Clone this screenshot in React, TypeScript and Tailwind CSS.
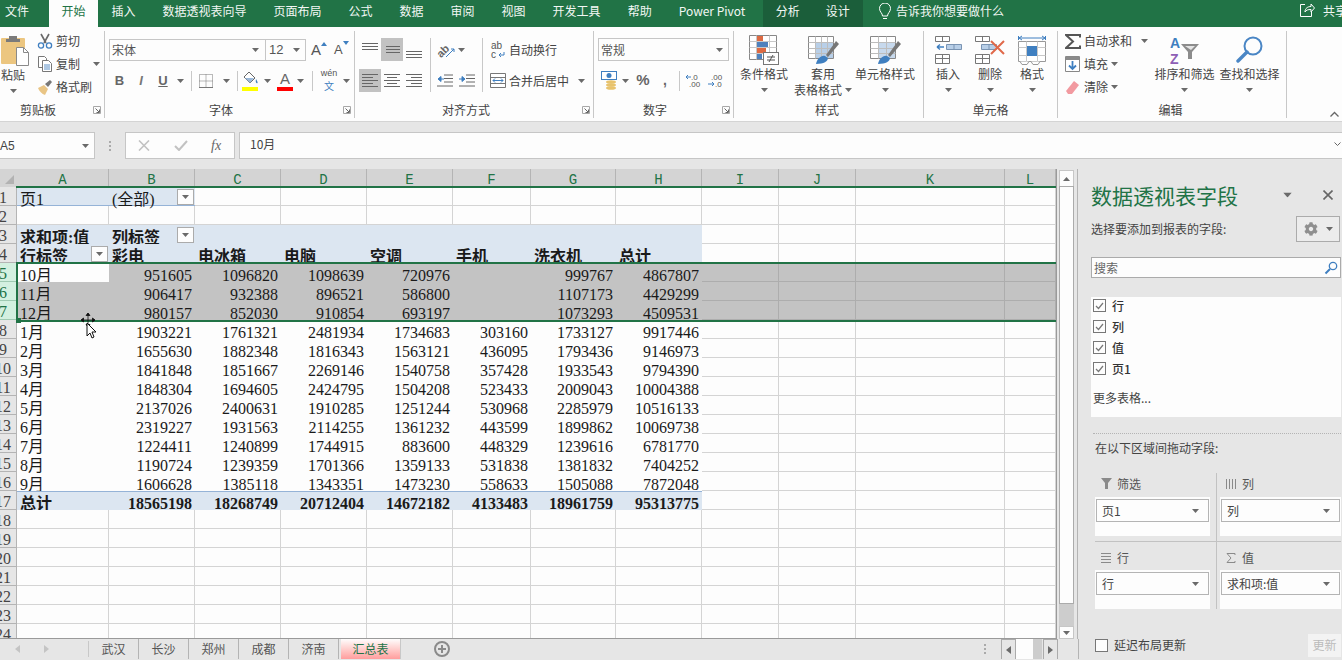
import React from "react";
import { FaCog } from "react-icons/fa";

const colLetters = ["A", "B", "C", "D", "E", "F", "G", "H", "I", "J", "K", "L"];
const rowGrid = "grid h-[19px] grid-rows-[19px] grid-cols-[17px_92px_86px_86px_86px_86px_78px_85px_86px_77px_77px_149px_51px]";

const selectedRows = [
  ["10月", "951605", "1096820", "1098639", "720976", "", "999767", "4867807"],
  ["11月", "906417", "932388", "896521", "586800", "", "1107173", "4429299"],
  ["12月", "980157", "852030", "910854", "693197", "", "1073293", "4509531"],
];

const dataRows = [
  ["1月", "1903221", "1761321", "2481934", "1734683", "303160", "1733127", "9917446"],
  ["2月", "1655630", "1882348", "1816343", "1563121", "436095", "1793436", "9146973"],
  ["3月", "1841848", "1851667", "2269146", "1540758", "357428", "1933543", "9794390"],
  ["4月", "1848304", "1694605", "2424795", "1504208", "523433", "2009043", "10004388"],
  ["5月", "2137026", "2400631", "1910285", "1251244", "530968", "2285979", "10516133"],
  ["6月", "2319227", "1931563", "2114255", "1361232", "443599", "1899862", "10069738"],
  ["7月", "1224411", "1240899", "1744915", "883600", "448329", "1239616", "6781770"],
  ["8月", "1190724", "1239359", "1701366", "1359133", "531838", "1381832", "7404252"],
  ["9月", "1606628", "1385118", "1343351", "1473230", "558633", "1505088", "7872048"],
];

const totalRow = ["总计", "18565198", "18268749", "20712404", "14672182", "4133483", "18961759", "95313775"];

const ribbonTabs = ["插入", "数据透视表向导", "页面布局", "公式", "数据", "审阅", "视图", "开发工具", "帮助", "Power Pivot"];

function Caret({ className = "" }: { className?: string }) {
  return (
    <svg width="7" height="4" viewBox="0 0 7 4" className={"shrink-0 " + className}>
      <path d="M0 0h7L3.5 4z" fill="#6a6a6a" />
    </svg>
  );
}

function Launcher() {
  return (
    <svg width="8" height="8" viewBox="0 0 8 8" className="shrink-0">
      <path d="M.5.5h7v7h-7z" fill="none" stroke="#a8a8a8" />
      <path d="M2.5 2.5l3.5 3.5M6.5 3.5v3h-3" fill="none" stroke="#666" />
    </svg>
  );
}

function Group({ label, launcher, labelPad = "", className, children }: { label: string; launcher?: boolean; labelPad?: string; className: string; children: React.ReactNode }) {
  return (
    <div className={"mt-[4px] flex h-[87px] shrink-0 flex-col border-r border-[#c8c8c8] " + className}>
      <div className="h-[71px]">{children}</div>
      <div className="flex h-[16px] items-center pr-[3px]">
        <span className={"flex-1 text-center leading-[16px] text-[#444] " + labelPad}>{label}</span>
        {launcher ? <Launcher /> : null}
      </div>
    </div>
  );
}

function Sep({ className = "" }: { className?: string }) {
  return <div className={"w-px shrink-0 bg-[#c8c8c8] " + className} />;
}

function Lines({ rows, active }: { rows: number[][]; active?: boolean }) {
  return (
    <div className={"flex h-[23px] w-[22px] items-center justify-center " + (active ? "bg-[#c2c2c2]" : "")}>
      <svg width="16" height="19" viewBox="0 0 16 19">
        {rows.map((r, i) => (
          <rect key={i} x={r[0]} y={r[1]} width={r[2]} height="1" fill="#666" />
        ))}
      </svg>
    </div>
  );
}

function BigButton({ icon, lines, width }: { icon: React.ReactNode; lines: string[]; width: string }) {
  return (
    <div className={"flex shrink-0 flex-col items-center " + width}>
      <div className="mt-[3px] flex h-[32px] items-center justify-center">{icon}</div>
      <span className="leading-[16px] text-[#444]">{lines[0]}</span>
      {lines[1] ? (
        <span className="flex items-center gap-[3px] leading-[15px] text-[#444]">
          {lines[1]}
          <Caret />
        </span>
      ) : (
        <Caret className="mt-[6px]" />
      )}
    </div>
  );
}

function SmallRow({ icon, text, caret }: { icon: React.ReactNode; text: string; caret?: string }) {
  return (
    <div className="flex h-[20px] items-center">
      <div className="flex w-[19px] shrink-0 items-center">{icon}</div>
      <span className="text-[#444]">{text}</span>
      {caret ? <Caret className={caret} /> : null}
    </div>
  );
}

const ClipboardIcon = (
  <svg width="30" height="31" viewBox="0 0 30 31">
    <rect x="1" y="3" width="24" height="26" rx="1" fill="#ecc680" />
    <path d="M9 1h8v3h3v3H6V4h3z" fill="#7b7b7b" />
    <path d="M16.5 12.5h7l5 5v13h-12z" fill="#fff" stroke="#8a8a8a" />
    <path d="M23.5 12.5v5h5" fill="none" stroke="#8a8a8a" />
  </svg>
);

const ScissorsIcon = (
  <svg width="16" height="16" viewBox="0 0 16 16">
    <path d="M4 1l5 9M12 1l-5 9" stroke="#6a6a6a" strokeWidth="1.6" />
    <circle cx="4" cy="12.5" r="2.6" fill="none" stroke="#3f7fc0" strokeWidth="1.3" />
    <circle cx="12" cy="12.5" r="2.6" fill="none" stroke="#3f7fc0" strokeWidth="1.3" />
  </svg>
);

const CopyIcon = (
  <svg width="16" height="16" viewBox="0 0 16 16">
    <path d="M1.5.5h6l2 2v9h-8z" fill="#fff" stroke="#777" />
    <path d="M5.5 4.5h6l3 3v8h-9z" fill="#fff" stroke="#777" />
    <path d="M7 9h6M7 11h6M7 13h6" stroke="#5b8fc7" />
  </svg>
);

const BrushIcon = (
  <svg width="16" height="16" viewBox="0 0 16 16">
    <path d="M1 9l6-3 4 4-3 6c-3-1-6-4-7-7z" fill="#e9c585" />
    <path d="M8 5l5-4 2 2-4 5z" fill="#777" />
  </svg>
);

const FillIcon = (
  <svg width="17" height="20" viewBox="0 0 17 20">
    <path d="M7 1l6 6-5 5-6-6z" fill="#fff" stroke="#666" />
    <path d="M3 7h9l-4 5z" fill="#9ab8da" />
    <path d="M14 8c1 2 2 3 1.500 4s-2.500 0-1.500-4z" fill="#3f7fc0" />
    <rect x="0" y="16" width="16" height="4" fill="#ffff00" />
  </svg>
);

const BordersIcon = (
  <svg width="14" height="14" viewBox="0 0 14 14">
    <path d="M.5.5h13v13H.5zM7 .5v13M.5 7h13" fill="none" stroke="#777" strokeDasharray="1 1" />
    <path d="M0 13.500h14" stroke="#777" />
  </svg>
);

const OrientIcon = (
  <svg width="20" height="20" viewBox="0 0 20 20">
    <text x="1" y="15" fontSize="11" fontFamily="Liberation Sans" fontWeight="700" fill="#666" transform="rotate(-45 7 12)">ab</text>
    <path d="M10 17l8-8M18 9h-3M18 9v3" stroke="#3f7fc0" fill="none" />
  </svg>
);

const WrapIcon = (
  <svg width="16" height="20" viewBox="0 0 16 20">
    <text x="1" y="9" fontSize="10" fontFamily="Liberation Sans" fill="#555">ab</text>
    <text x="1" y="18" fontSize="10" fontFamily="Liberation Sans" fill="#555">c</text>
    <path d="M14 12v3h-5M9 15l2-2M9 15l2 2" stroke="#3f7fc0" fill="none" />
  </svg>
);

const MergeIcon = (
  <svg width="16" height="15" viewBox="0 0 16 15">
    <path d="M.5.5h15v14H.5zM.5 4.500h15M.5 10.500h15" fill="#fff" stroke="#777" />
    <path d="M3 7.500h10M3 7.500l2-2M3 7.500l2 2M13 7.500l-2-2M13 7.500l-2 2" stroke="#3f7fc0" fill="none" />
  </svg>
);

function IndentIcon({ flip }: { flip?: boolean }) {
  return (
    <svg width="16" height="13" viewBox="0 0 16 13">
      <path d="M7 1h9M7 4.500h9M7 8h9M0 12h16" stroke="#666" />
      <path d={flip ? "M0 5h5M3 2.500L6 5 3 7.500z" : "M7 5H2M4 2.500L1 5l3 2.500z"} stroke="#3f7fc0" fill="#3f7fc0" />
    </svg>
  );
}

const AccountingIcon = (
  <svg width="18" height="19" viewBox="0 0 18 19">
    <rect x="0.500" y="0.500" width="15" height="8" fill="#fff" stroke="#3f7fc0" />
    <circle cx="8" cy="4.500" r="2.500" fill="#3f7fc0" />
    <ellipse cx="10" cy="11" rx="5" ry="1.800" fill="#e8c36e" />
    <ellipse cx="10" cy="14" rx="5" ry="1.800" fill="#e8c36e" />
    <ellipse cx="10" cy="17" rx="5" ry="1.800" fill="#e8c36e" />
  </svg>
);

function DecimalIcon({ more }: { more?: boolean }) {
  return (
    <svg width="18" height="15" viewBox="0 0 18 15">
      <text x={more ? 3 : 5} y="6.500" fontSize="8" fontFamily="Liberation Sans" fill="#555">{more ? ".00" : ".0"}</text>
      <text x={more ? 7 : 3} y="14" fontSize="8" fontFamily="Liberation Sans" fill="#555">{more ? ".0" : ".00"}</text>
      {more ? (
        <path d="M0 11h6M4 9l2 2-2 2" stroke="#3f7fc0" fill="none" />
      ) : (
        <path d="M0 4h5M2 2L0 4l2 2" stroke="#3f7fc0" fill="none" />
      )}
    </svg>
  );
}

const CondFormatIcon = (
  <svg width="30" height="30" viewBox="0 0 30 30">
    <path d="M.5.500h27v24H.5z" fill="#fff" stroke="#888" />
    <path d="M.5 6.500h27M.5 12.500h27M.5 18.500h27M7.500.500v24M20.500.500v24" stroke="#c8c8c8" />
    <rect x="8" y="1" width="6" height="5" fill="#dd6a43" />
    <rect x="8" y="7" width="11" height="5" fill="#4f81bd" />
    <rect x="8" y="13" width="9" height="5" fill="#dd6a43" />
    <rect x="8" y="19" width="5" height="5" fill="#4f81bd" />
    <rect x="14.500" y="17.500" width="15" height="12" fill="#fff" stroke="#777" />
    <path d="M18 22h8M18 25h8M24 20l-4 7" stroke="#555" fill="none" />
  </svg>
);

const TableStyleIcon = (
  <svg width="31" height="30" viewBox="0 0 31 30">
    <path d="M.5 1.500h25v22H.5z" fill="#fff" stroke="#888" />
    <rect x="7" y="7" width="18" height="16" fill="#b8cfe8" />
    <path d="M.5 7.500h25M.5 13.500h25M.5 18.500h25M7.500 1.500v22M13.500 1.500v22M19.500 1.500v22" stroke="#bdbdbd" />
    <path d="M18 20l10-14 3 3-11 13z" fill="#777" />
    <path d="M8 29c1-5 5-9 9-8l3 2c0 3-4 6-12 6z" fill="#3f7fc0" />
  </svg>
);

const CellStyleIcon = (
  <svg width="31" height="30" viewBox="0 0 31 30">
    <path d="M.5 1.500h25v22H.5z" fill="#fff" stroke="#888" />
    <rect x="8" y="8" width="17" height="15" fill="#c7d9ed" />
    <path d="M.5 7.500h25M.5 13.500h25M.5 18.500h25M8.500 1.500v22M16.500 1.500v22" stroke="#bdbdbd" />
    <path d="M18 20l10-14 3 3-11 13z" fill="#777" />
    <path d="M8 29c1-5 5-9 9-8l3 2c0 3-4 6-12 6z" fill="#3f7fc0" />
  </svg>
);

const InsertCellIcon = (
  <svg width="27" height="28" viewBox="0 0 27 28">
    <path d="M.5.500h14v5H.5zM7.500.500v5M.5 18.500h14v9H.5zM.5 22.500h14M7.500 18.500v9" fill="#fff" stroke="#777" />
    <path d="M11.500 8.500h15v5h-15zM19 8.500v5" fill="#b8cfe8" stroke="#7a94b3" />
    <path d="M2 11h7M2 11l3-2.500M2 11l3 2.500" stroke="#3f7fc0" strokeWidth="1.400" fill="none" />
  </svg>
);

const DeleteCellIcon = (
  <svg width="30" height="28" viewBox="0 0 30 28">
    <path d="M.5.500h14v5H.5zM7.500.500v5M.5 18.500h14v9H.5zM.5 22.500h14M7.500 18.500v9" fill="#fff" stroke="#777" />
    <path d="M6.500 8.500h15v5h-15zM14 8.500v5" fill="#b8cfe8" stroke="#7a94b3" />
    <path d="M16 5l13 13M29 5L16 18" stroke="#e0694a" strokeWidth="2" />
  </svg>
);

const CellFormatIcon = (
  <svg width="28" height="31" viewBox="0 0 28 31">
    <path d="M.5 1v4M27.500 1v4M1 3h26M1 3l3-2M1 3l3 2M27 3l-3-2M27 3l-3 2" stroke="#3f7fc0" fill="none" />
    <path d="M.5 6.500h27v20H.5z" fill="#fff" stroke="#999" />
    <path d="M.5 12.500h27M.5 20.500h27M8.500 6.500v20M19.500 6.500v20" stroke="#c8c8c8" />
    <rect x="9" y="11" width="10" height="10" fill="#3f7fc0" />
    <path d="M2 26.500l2 3h5l2-3M13 26.500l2 3h5l2-3" fill="#fff" stroke="#999" />
  </svg>
);

const SumIcon = (
  <svg width="16" height="15" viewBox="0 0 16 15">
    <path d="M15 3.500V1H1l7 6.500L1 14h14v-2.500" fill="none" stroke="#555" strokeWidth="2" />
  </svg>
);

const FillDownIcon = (
  <svg width="15" height="16" viewBox="0 0 15 16">
    <path d="M.5.500h14v15H.5z" fill="#fff" stroke="#888" />
    <rect x="1" y="1" width="13" height="3" fill="#8a8a8a" />
    <path d="M7.500 5v8M4 9.500l3.500 3.500L11 9.500" fill="none" stroke="#3f7fc0" strokeWidth="1.800" />
  </svg>
);

const EraserIcon = (
  <svg width="15" height="15" viewBox="0 0 15 15">
    <path d="M9 1l5 4-7 9H3L1 11z" fill="#f29aa0" />
  </svg>
);

const SortIcon = (
  <svg width="30" height="30" viewBox="0 0 30 30">
    <text x="0" y="13" fontSize="14" fontWeight="700" fontFamily="Liberation Sans" fill="#3f7fc0">A</text>
    <text x="0" y="29" fontSize="14" fontWeight="700" fontFamily="Liberation Sans" fill="#8e5fb5">Z</text>
    <path d="M11 9h18l-7 8v7h-4v-7z" fill="#8c8c8c" />
    <path d="M15 11h10l-4 4z" fill="#e4e4e4" />
  </svg>
);

const FindIcon = (
  <svg width="28" height="28" viewBox="0 0 28 28">
    <circle cx="17" cy="10" r="8.500" fill="none" stroke="#4a86c5" strokeWidth="2" />
    <path d="M11 16L2 25" stroke="#4a86c5" strokeWidth="3.400" strokeLinecap="round" />
  </svg>
);

function Ribbon() {
  return (
    <div className="flex h-[94px] shrink-0 bg-[#fdfdfd] text-[12px]">
      <Group label="剪贴板" launcher labelPad="pr-[17px]" className="w-[105px]">
        <div className="flex">
          <div className="flex w-[30px] flex-col items-start">
            <div className="mt-[4px]">{ClipboardIcon}</div>
            <span className="mt-[1px] pl-[1px] leading-[16px] text-[#444]">粘贴</span>
            <Caret className="ml-[10px] mt-[6px]" />
          </div>
          <div className="ml-[7px] flex flex-col gap-[3px]">
            <SmallRow icon={ScissorsIcon} text="剪切" />
            <SmallRow icon={CopyIcon} text="复制" caret="ml-[13px]" />
            <SmallRow icon={BrushIcon} text="格式刷" />
          </div>
        </div>
      </Group>

      <Group label="字体" launcher labelPad="pr-[10px]" className="w-[250px] pl-[4px]">
        <div className="mt-[8px] flex h-[22px] items-center">
          <div className="flex h-[22px] w-[157px] items-center justify-between border border-[#c6c6c6] pl-[2px] pr-[6px]">
            <span className="text-[#555]">宋体</span>
            <Caret />
          </div>
          <div className="flex h-[22px] w-[40px] items-center justify-between border border-l-0 border-[#c6c6c6] pl-[3px] pr-[5px]">
            <span className="font-['Liberation_Sans'] text-[13px] text-[#555]">12</span>
            <Caret />
          </div>
          <div className="ml-[5px] flex w-[16px] items-start">
            <span className="font-['Liberation_Sans'] text-[15px] leading-[22px] text-[#555]">A</span>
            <svg width="6" height="4" viewBox="0 0 6 4" className="mt-[3px] shrink-0"><path d="M3 0l3 4H0z" fill="#3f7fc0" /></svg>
          </div>
          <div className="ml-[7px] flex w-[15px] items-start">
            <span className="font-['Liberation_Sans'] text-[13px] leading-[24px] text-[#555]">A</span>
            <svg width="6" height="4" viewBox="0 0 6 4" className="mt-[3px] shrink-0"><path d="M0 0h6L3 4z" fill="#3f7fc0" /></svg>
          </div>
        </div>
        <div className="mt-[8px] flex h-[23px] items-center font-['Liberation_Sans'] text-[#666]">
          <span className="w-[21px] text-center text-[13px] font-bold">B</span>
          <span className="w-[22px] text-center text-[13px] italic font-bold text-[#777]">I</span>
          <span className="w-[22px] text-center text-[13px] font-bold underline">U</span>
          <div className="flex w-[12px] justify-center"><Caret /></div>
          <Sep className="ml-[5px] h-[20px]" />
          <div className="ml-[7px]">{BordersIcon}</div>
          <Caret className="ml-[10px]" />
          <Sep className="ml-[7px] h-[20px]" />
          <div className="ml-[4px]">{FillIcon}</div>
          <Caret className="ml-[5px]" />
          <div className="ml-[6px] flex w-[16px] flex-col items-center">
            <span className="h-[17px] text-[15px] leading-[18px]">A</span>
            <div className="h-[4px] w-[16px] bg-[#ff0000]" />
          </div>
          <Caret className="ml-[4px]" />
          <Sep className="ml-[8px] h-[20px]" />
          <div className="ml-[8px] flex w-[16px] flex-col items-center leading-none">
            <span className="h-[11px] text-[9px] leading-[9px] text-[#555]">wén</span>
            <span className="h-[12px] font-['Noto_Sans_CJK_SC'] text-[10px] leading-[12px] text-[#3f7fc0]">文</span>
          </div>
          <Caret className="ml-[6px]" />
        </div>
      </Group>

      <Group label="对齐方式" launcher labelPad="pr-[9px]" className="w-[239px] pl-[4px]">
        <div className="flex pt-[7px]">
          <div className="flex w-[66px] flex-wrap gap-y-[8px]">
            <Lines rows={[[0, 3, 16], [0, 6, 16], [0, 9, 16]]} />
            <Lines active rows={[[2, 6, 14], [2, 9, 14], [2, 12, 14]]} />
            <Lines rows={[[0, 11, 16], [0, 14, 16], [0, 17, 16]]} />
            <Lines active rows={[[0, 3, 16], [0, 6, 11], [0, 9, 16], [0, 12, 11], [0, 15, 16]]} />
            <Lines rows={[[0, 3, 16], [3, 6, 10], [0, 9, 16], [3, 12, 10], [0, 15, 16]]} />
            <Lines rows={[[0, 3, 16], [5, 6, 11], [0, 9, 16], [5, 12, 11], [0, 15, 16]]} />
          </div>
          <Sep className="ml-[5px] h-[54px]" />
          <div className="flex w-[51px] flex-col gap-[8px]">
            <div className="flex h-[23px] items-center pl-[5px]">{OrientIcon}<Caret className="ml-[2px]" /></div>
            <div className="flex h-[23px] items-center gap-[6px] pl-[6px]"><IndentIcon /><IndentIcon flip /></div>
          </div>
          <Sep className="h-[54px]" />
          <div className="flex flex-col gap-[8px] pl-[7px]">
            <div className="flex h-[23px] items-center gap-[3px]">{WrapIcon}<span className="text-[#444]">自动换行</span></div>
            <div className="flex h-[23px] items-center gap-[3px]">{MergeIcon}<span className="text-[#444]">合并后居中</span><Caret className="ml-[6px]" /></div>
          </div>
        </div>
      </Group>

      <Group label="数字" launcher labelPad="pr-[10px]" className="w-[140px] pl-[4px]">
        <div className="mt-[7px] flex h-[23px] w-[131px] items-center justify-between border border-[#c6c6c6] pl-[2px] pr-[5px]">
          <span className="text-[#555]">常规</span>
          <Caret />
        </div>
        <div className="mt-[8px] flex h-[23px] items-center pl-[3px] font-['Liberation_Sans'] text-[#666]">
          {AccountingIcon}
          <Caret className="ml-[3px]" />
          <span className="ml-[6px] w-[16px] text-center text-[15px] font-bold">%</span>
          <span className="ml-[8px] w-[12px] text-center text-[14px] font-bold">,</span>
          <Sep className="ml-[8px] h-[20px]" />
          <div className="ml-[6px]"><DecimalIcon /></div>
          <div className="ml-[4px]"><DecimalIcon more /></div>
        </div>
      </Group>

      <Group label="样式" className="w-[190px]">
        <div className="flex">
          <BigButton width="w-[60px]" icon={CondFormatIcon} lines={["条件格式"]} />
          <BigButton width="w-[58px]" icon={TableStyleIcon} lines={["套用", "表格格式"]} />
          <BigButton width="w-[66px]" icon={CellStyleIcon} lines={["单元格样式"]} />
        </div>
      </Group>

      <Group label="单元格" className="w-[134px] pl-[3px]">
        <div className="flex">
          <BigButton width="w-[42px]" icon={InsertCellIcon} lines={["插入"]} />
          <BigButton width="w-[42px]" icon={DeleteCellIcon} lines={["删除"]} />
          <BigButton width="w-[42px]" icon={CellFormatIcon} lines={["格式"]} />
        </div>
      </Group>

      <Group label="编辑" className="w-[229px]">
        <div className="flex">
          <div className="flex w-[94px] shrink-0 flex-col gap-[3px] pl-[7px]">
            <SmallRow icon={SumIcon} text="自动求和" caret="ml-[9px]" />
            <SmallRow icon={FillDownIcon} text="填充" caret="ml-[3px]" />
            <SmallRow icon={EraserIcon} text="清除" caret="ml-[3px]" />
          </div>
          <BigButton width="w-[65px]" icon={SortIcon} lines={["排序和筛选"]} />
          <BigButton width="w-[65px]" icon={FindIcon} lines={["查找和选择"]} />
        </div>
      </Group>

      <div className="flex flex-1 items-end justify-end pb-[4px] pr-[3px]">
        <svg width="9" height="6" viewBox="0 0 9 6"><path d="M.5 5.500l4-4 4 4" fill="none" stroke="#666" strokeWidth="1.300" /></svg>
      </div>
    </div>
  );
}

function TitleTabs() {
  return (
    <div className="flex h-[27px] shrink-0 items-start bg-[#217346] text-[12px] leading-[20px] text-[#f2f7f4]">
      <span className="w-[49px] shrink-0 whitespace-nowrap pl-[5px] pt-[1px]">文件</span>
      <span className="h-[27px] w-[49px] shrink-0 bg-[#fdfdfd] pt-[1px] text-center text-[#217346]">开始</span>
      {ribbonTabs.map((t) => (
        <span key={t} className="shrink-0 whitespace-nowrap px-[13.5px] pt-[1px]">{t}</span>
      ))}
      <div className="ml-[4px] flex h-[27px] w-[100px] shrink-0 bg-[#1b5e3a]">
        <span className="w-[50px] pt-[1px] text-center">分析</span>
        <span className="w-[50px] pt-[1px] text-center">设计</span>
      </div>
      <svg width="14" height="18" viewBox="0 0 14 18" className="ml-[15px] mt-[3px] shrink-0">
        <path d="M4.500 13c0-3-3-4-3-7.500a5.500 5.500 0 0 1 11 0C12.500 9 9.500 10 9.500 13zM5 15.500h4" fill="none" stroke="#fff" />
      </svg>
      <span className="ml-[4px] shrink-0 whitespace-nowrap pt-[1px]">告诉我你想要做什么</span>
      <svg width="15" height="14" viewBox="0 0 15 14" className="ml-[296px] mt-[3px] shrink-0">
        <path d="M5 1.500H.5v12h11V9M5 9c0-4 3-5.500 6-5.500V1l3.500 4L11 9V6.500C8 6.500 6 7 5 9z" fill="none" stroke="#fff" />
      </svg>
      <span className="ml-[8px] shrink-0 whitespace-nowrap pt-[1px]">共享</span>
    </div>
  );
}

function FormulaBar() {
  return (
    <div className="flex h-[48px] shrink-0 items-start border-t border-[#d4d4d4] bg-[#e6e6e6] pt-[10px] text-[12px]">
      <div className="flex h-[27px] w-[95px] items-center justify-between border border-l-0 border-[#c6c6c6] bg-[#fdfdfd] pr-[5px]">
        <span className="font-['Liberation_Sans'] text-[#444]">A5</span>
        <Caret />
      </div>
      <div className="flex h-[27px] w-[30px] flex-col items-center justify-center gap-[2px]">
        <div className="h-[2px] w-[2px] bg-[#aaa]" />
        <div className="h-[2px] w-[2px] bg-[#aaa]" />
        <div className="h-[2px] w-[2px] bg-[#aaa]" />
      </div>
      <div className="flex h-[27px] w-[110px] items-center border border-[#c6c6c6] bg-[#fdfdfd]">
        <svg width="12" height="11" viewBox="0 0 12 11" className="ml-[12px]"><path d="M1 .5l10 10M11 .5l-10 10" stroke="#c2c2c2" strokeWidth="1.600" /></svg>
        <svg width="14" height="11" viewBox="0 0 14 11" className="ml-[24px]"><path d="M1 6l4 4 8-9" fill="none" stroke="#c2c2c2" strokeWidth="2" /></svg>
        <span className="ml-[23px] font-['Liberation_Serif'] text-[14px] italic text-[#666]">fx</span>
      </div>
      <div className="ml-[4px] flex h-[27px] flex-1 items-center justify-between border-y border-l border-[#c6c6c6] bg-[#fdfdfd] pb-[3px] pl-[10px] pr-[1px]">
        <span className="text-[#444]">10月</span>
        <svg width="7" height="5" viewBox="0 0 7 5"><path d="M.5.500l3 3 3-3" fill="none" stroke="#666" /></svg>
      </div>
    </div>
  );
}

function FilterButton() {
  return (
    <div className="flex h-[16px] w-[17px] shrink-0 items-center justify-center border border-[#ababab] bg-[#fdfdfd]">
      <Caret />
    </div>
  );
}

function RowHead({ n, selected }: { n: number; selected?: boolean }) {
  return (
    <div className={"h-[19px] w-[17px] overflow-hidden border-b border-r font-['Liberation_Serif'] text-[16px] leading-[21px] " + (selected ? "border-[#9fcab2] bg-[#d3f0e0] text-[#217346]" : "border-[#b4b4b4] bg-[#e6e6e6] text-[#444]")}>
      <div className="-ml-[10px] w-[26px] text-center">{n}</div>
    </div>
  );
}

function EmptyCols({ cls, from = 9 }: { cls: string; from?: number }) {
  return (
    <>
      {colLetters.slice(from - 1).map((c) => (
        <div key={c} className={cls} />
      ))}
    </>
  );
}

const plainCell = "border-b border-r border-[#d4d4d4]";
const pivotBg = "bg-[#dce6f1]";

function Sheet() {
  return (
    <div className="relative h-[470px] w-[1057px] shrink-0 overflow-hidden border-b border-r border-[#9a9a9a] bg-[#fdfdfd] font-['Liberation_Serif','Noto_Sans_CJK_SC',serif] text-[16px] leading-[25px] text-[#1a1a1a]">
      <div className="grid h-[18px] grid-rows-[18px] grid-cols-[17px_92px_86px_86px_86px_86px_78px_85px_86px_77px_77px_149px_51px] bg-[#d4d4d4]">
        <div className="flex items-end justify-end pb-[3px] pr-[3px]">
          <svg width="9" height="9" viewBox="0 0 9 9"><path d="M9 0v9H0z" fill="#b2b2b2" /></svg>
        </div>
        {colLetters.map((c) => (
          <div key={c} className="overflow-hidden border-r border-[#b4b4b4] text-center font-['Liberation_Mono'] text-[14px] leading-[23px] text-[#217346]">{c}</div>
        ))}
      </div>

      <div className={rowGrid}>
        <RowHead n={1} />
        <div className={"border-b border-[#95b3d7] pl-[3px] " + pivotBg}>页1</div>
        <div className={"flex items-start justify-between border-b border-[#95b3d7] pl-[3px] pr-[1px] pt-[2px] " + pivotBg}>
          <span className="-mt-[2px]">(全部)</span>
          <FilterButton />
        </div>
        <EmptyCols cls={plainCell} from={3} />
      </div>
      <div className={rowGrid}>
        <RowHead n={2} />
        <EmptyCols cls={plainCell} from={1} />
      </div>
      <div className={rowGrid}>
        <RowHead n={3} />
        <div className={"pl-[3px] font-bold " + pivotBg}>求和项:值</div>
        <div className={"flex items-start justify-between pl-[3px] pr-[1px] pt-[2px] font-bold " + pivotBg}>
          <span className="-mt-[2px]">列标签</span>
          <FilterButton />
        </div>
        {["C", "D", "E", "F", "G", "H"].map((c) => (
          <div key={c} className={pivotBg} />
        ))}
        <EmptyCols cls={plainCell} />
      </div>
      <div className={rowGrid}>
        <RowHead n={4} />
        <div className={"flex items-start justify-between overflow-hidden pl-[3px] pr-[1px] pt-[2px] font-bold " + pivotBg}>
          <span className="-mt-[2px] whitespace-nowrap">行标签</span>
          <FilterButton />
        </div>
        {["彩电", "电冰箱", "电脑", "空调", "手机", "洗衣机", "总计"].map((h) => (
          <div key={h} className={"overflow-hidden whitespace-nowrap pl-[3px] font-bold " + pivotBg}>{h}</div>
        ))}
        <EmptyCols cls={plainCell} />
      </div>

      {selectedRows.map((row, r) => (
        <div key={r} className={rowGrid}>
          <RowHead n={r + 5} selected />
          {row.map((v, i) => (
            <div key={i} className={i === 0 ? (r === 0 ? "bg-[#fdfdfd] pl-[3px]" : "bg-[#c3c3c3] pl-[3px]") : "bg-[#c3c3c3] pr-[3px] text-right"}>{v}</div>
          ))}
          <EmptyCols cls="border-b border-r border-[#adadad] bg-[#c3c3c3]" />
        </div>
      ))}

      {dataRows.map((row, r) => (
        <div key={r} className={rowGrid}>
          <RowHead n={r + 8} />
          {row.map((v, i) => (
            <div key={i} className={i === 0 ? "pl-[3px]" : "pr-[3px] text-right"}>{v}</div>
          ))}
          <EmptyCols cls={plainCell} />
        </div>
      ))}

      <div className={rowGrid}>
        <RowHead n={17} />
        {totalRow.map((v, i) => (
          <div key={i} className={"overflow-hidden border-t border-[#95b3d7] leading-[23px] font-bold " + pivotBg + (i === 0 ? " pl-[3px]" : " pr-[3px] text-right")}>{v}</div>
        ))}
        <EmptyCols cls={plainCell} />
      </div>

      {[18, 19, 20, 21, 22, 23, 24].map((n) => (
        <div key={n} className={rowGrid}>
          <RowHead n={n} />
          <EmptyCols cls={plainCell} from={1} />
        </div>
      ))}

      <div className="absolute left-[16px] right-0 top-[17px] h-[2px] bg-[#217346]" />
      <div className="absolute left-[16px] right-0 top-[93px] h-[60px] border-y-2 border-l-2 border-[#217346]" />
      <div className="absolute left-[16px] top-[149px] h-[5px] w-[5px] bg-[#217346]" />
      <svg width="18" height="28" viewBox="0 0 18 28" className="absolute left-[79px] top-[143px]">
        <path d="M9 1v14M2 8h14M9 1L7 3.500h4zM9 15l-2-2.500h4zM2 8l2.500-2v4zM16 8l-2.500-2v4z" fill="#111" stroke="#111" strokeWidth=".8" />
        <path d="M8 11v13l3-3 2 5 2-1-2-5h4z" fill="#fff" stroke="#111" />
      </svg>
    </div>
  );
}

function Scrollbar() {
  return (
    <div className="flex h-[470px] w-[21px] shrink-0 flex-col items-center border-r border-[#b4b4b4] pl-[2px] pt-[1px]">
      <div className="mr-[3px] flex h-[16px] w-[15px] shrink-0 items-center justify-center border border-b-0 border-[#c6c6c6] bg-[#fdfdfd]">
        <svg width="7" height="4" viewBox="0 0 7 4"><path d="M3.500 0L7 4H0z" fill="#6a6a6a" /></svg>
      </div>
      <div className="mr-[3px] h-[418px] w-[15px] shrink-0 border border-[#ababab] bg-[#fdfdfd]" />
      <div className="mr-[3px] h-[22px] w-[15px] shrink-0 bg-[#cdcdcd]" />
      <div className="mr-[3px] flex h-[13px] w-[15px] shrink-0 items-center justify-center border border-[#c6c6c6] bg-[#fdfdfd]">
        <Caret />
      </div>
    </div>
  );
}

function SheetTabs() {
  return (
    <div className="flex h-[20px] shrink-0 items-center border-r border-[#b4b4b4] bg-[#e6e6e6] text-[12px]">
      <svg width="5" height="8" viewBox="0 0 5 8" className="ml-[15px]"><path d="M5 0v8L0 4z" fill="#c4c4c4" /></svg>
      <svg width="5" height="8" viewBox="0 0 5 8" className="ml-[24px]"><path d="M0 0v8l5-4z" fill="#c4c4c4" /></svg>
      <Sep className="ml-[39px] h-[16px] bg-[#a8a8a8]" />
      {["武汉", "长沙", "郑州", "成都", "济南"].map((s) => (
        <div key={s} className="flex h-[20px] w-[50px] shrink-0 items-center justify-center border-r border-[#b4b4b4] text-[#555]">{s}</div>
      ))}
      <div className="ml-[2px] flex h-[20px] w-[59px] shrink-0 items-center justify-center bg-gradient-to-b from-[#fdfdfd] to-[#ff9d9d] text-[#217346]">汇总表</div>
      <Sep className="h-[20px] bg-[#8f8f8f]" />
      <div className="ml-[33px] flex h-[16px] w-[16px] shrink-0 items-center justify-center rounded-full border-2 border-[#8a8a8a]">
        <svg width="8" height="8" viewBox="0 0 8 8"><path d="M4 0v8M0 4h8" stroke="#8a8a8a" strokeWidth="2" /></svg>
      </div>
      <div className="ml-[534px] flex flex-col gap-[2px]">
        <div className="h-[2px] w-[2px] bg-[#aaa]" />
        <div className="h-[2px] w-[2px] bg-[#aaa]" />
        <div className="h-[2px] w-[2px] bg-[#aaa]" />
      </div>
      <div className="ml-[15px] flex h-[20px] w-[15px] items-center justify-center border border-b-0 border-[#ababab]">
        <svg width="5" height="8" viewBox="0 0 5 8"><path d="M5 0v8L0 4z" fill="#6a6a6a" /></svg>
      </div>
      <div className="h-[20px] w-[17px] bg-[#fdfdfd]" />
      <div className="h-[20px] w-[9px] bg-[#cdcdcd]" />
      <div className="ml-[1px] flex h-[20px] w-[15px] items-center justify-center border border-b-0 border-[#ababab]">
        <svg width="5" height="8" viewBox="0 0 5 8"><path d="M0 0v8l5-4z" fill="#6a6a6a" /></svg>
      </div>
    </div>
  );
}

function FieldCheck({ label }: { label: string }) {
  return (
    <div className="flex h-[21px] items-center gap-[6px] pl-[2px]">
      <div className="flex h-[13px] w-[13px] items-center justify-center border border-[#777] bg-[#fdfdfd]">
        <svg width="9" height="8" viewBox="0 0 9 8"><path d="M1 4l2.500 2.500L8 1" fill="none" stroke="#777" strokeWidth="1.200" /></svg>
      </div>
      <span className="font-medium text-[#333]">{label}</span>
    </div>
  );
}

function Zone({ icon, title, value, className, headClass = "" }: { icon: React.ReactNode; title: string; value: string; className: string; headClass?: string }) {
  return (
    <div className={"flex flex-col " + className}>
      <div className={"flex h-[24px] items-center " + headClass}>
        <div className="flex w-[22px] justify-center">{icon}</div>
        <span className="text-[#555]">{title}</span>
      </div>
      <div className="h-[39px] bg-[#fdfdfd] pt-[2px]">
        <div className="mx-[1px] flex h-[23px] items-center justify-between border border-[#b4b4b4] pl-[5px] pr-[9px] text-[#444]">
          <span>{value}</span>
          <Caret />
        </div>
      </div>
    </div>
  );
}

function FieldPanel() {
  return (
    <div className="flex h-[490px] flex-1 flex-col bg-[#e6e6e6] pl-[12px] text-[12px]">
      <div className="mt-[14px] flex h-[24px] items-center">
        <span className="shrink-0 text-[21px] leading-[24px] text-[#217346]">数据透视表字段</span>
        <Caret className="ml-[46px] scale-125" />
        <svg width="10" height="10" viewBox="0 0 10 10" className="ml-[32px] shrink-0"><path d="M.5.500l9 9M9.500.500l-9 9" stroke="#666" strokeWidth="1.600" /></svg>
      </div>
      <div className="mt-[9px] flex h-[26px] items-center justify-between pr-[2px]">
        <span className="text-[#444]">选择要添加到报表的字段:</span>
        <div className="flex h-[26px] w-[44px] items-center justify-center gap-[8px] border border-[#ababab] bg-[#ececec]">
          <FaCog size={14} color="#8f8f8f" />
          <Caret />
        </div>
      </div>
      <div className="mt-[15px] flex h-[21px] w-[250px] items-center justify-between border border-[#ababab] bg-[#fdfdfd] pl-[2px] pr-[2px] text-[#666]">
        <span>搜索</span>
        <svg width="14" height="14" viewBox="0 0 14 14">
          <circle cx="9" cy="5" r="3.700" fill="none" stroke="#3f7fc0" strokeWidth="1.300" />
          <path d="M6 8l-4.500 4.500" stroke="#3f7fc0" strokeWidth="2" />
        </svg>
      </div>
      <div className="mt-[19px] h-[120px] w-[250px] bg-[#fdfdfd]">
        <div className="-translate-y-[2px]">
          {["行", "列", "值", "页1"].map((f) => (
            <FieldCheck key={f} label={f} />
          ))}
          <div className="mt-[10px] pl-[2px] text-[#444]">更多表格...</div>
        </div>
      </div>
      <div className="ml-[2px] mt-[16px] w-[248px] border-t border-dotted border-[#b4b4b4]" />
      <div className="ml-[4px] mt-[5px] h-[18px] text-[#444]">在以下区域间拖动字段:</div>
      <div className="ml-[4px] mt-[16px] grid w-[246px] grid-cols-[122px_124px]">
        <Zone
          className="border-b border-r border-[#c2c2c2] pb-[5px] pr-[6px]"
          headClass="pb-[3px]"
          title="筛选"
          value="页1"
          icon={<svg width="11" height="11" viewBox="0 0 11 11"><path d="M0 0h11L7 5v6H4V5z" fill="#8a8a8a" /></svg>}
        />
        <Zone
          className="border-b border-[#c2c2c2] pb-[5px] pl-[3px]"
          headClass="pb-[3px]"
          title="列"
          value="列"
          icon={<svg width="10" height="10" viewBox="0 0 10 10"><path d="M.5 0v10M3.500 0v10M6.500 0v10M9.500 0v10" stroke="#8a8a8a" /></svg>}
        />
        <Zone
          className="border-r border-[#c2c2c2] pr-[6px] pt-[4px]"
          title="行"
          value="行"
          icon={<svg width="10" height="10" viewBox="0 0 10 10"><path d="M0 .5h10M0 3.500h10M0 6.500h10M0 9.500h10" stroke="#8a8a8a" /></svg>}
        />
        <Zone
          className="pl-[3px] pt-[4px]"
          title="值"
          value="求和项:值"
          icon={<svg width="10" height="10" viewBox="0 0 10 10"><path d="M9 2V.5H1l4 4.500-4 4.500h8V8" fill="none" stroke="#8a8a8a" /></svg>}
        />
      </div>
      <div className="ml-[4px] mt-[24px] flex h-[24px] w-[246px] items-center justify-between">
        <div className="flex items-center gap-[6px]">
          <div className="h-[13px] w-[13px] border border-[#777] bg-[#fdfdfd]" />
          <span className="text-[#444]">延迟布局更新</span>
        </div>
        <div className="flex h-[23px] w-[33px] items-center justify-center bg-[#f3f3f3] text-[#bbb]">更新</div>
      </div>
    </div>
  );
}

export default function App() {
  return (
    <div className="flex h-[660px] w-[1342px] flex-col overflow-hidden bg-[#e6e6e6] font-['Noto_Sans_CJK_SC',sans-serif]">
      <TitleTabs />
      <Ribbon />
      <FormulaBar />
      <div className="flex flex-1">
        <div className="flex w-[1079px] shrink-0 flex-col">
          <div className="flex">
            <Sheet />
            <Scrollbar />
          </div>
          <SheetTabs />
        </div>
        <FieldPanel />
      </div>
    </div>
  );
}
